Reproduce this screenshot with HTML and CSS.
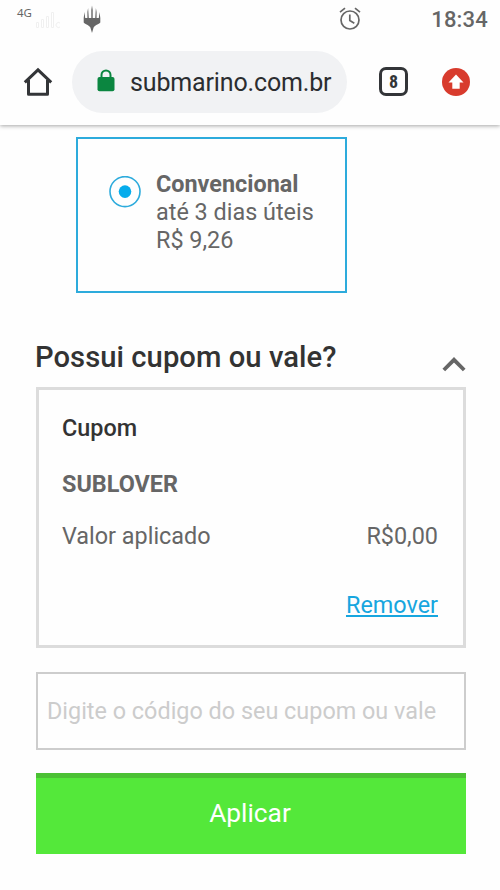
FILE: index.html
```html
<!DOCTYPE html>
<html lang="pt-BR">
<head>
<meta charset="utf-8">
<title>Submarino</title>
<link rel="stylesheet" href="styles.css">
</head>
<body>
<header class="browser">
  <div class="status">
    <span class="network">4G</span>
    <svg class="signal" width="26" height="18" viewBox="0 0 26 18"><g fill="#fff" stroke="#f0f0f0"><path d="M1.500 11.500h2v5h-2zM6.500 8.500h2v8h-2zM11.500 5.500h2v11h-2zM16.500 1.500h2v15h-2z"/></g><path d="M25 12a2.500 2.500 0 1 0 0 4" fill="none" stroke="#f0f0f0"/></svg>
    <svg class="walker" width="18" height="28" viewBox="0 0 18 28"><path fill="#666" d="M9 .5 9.700 5V13H12.200L12.900 3 13.600 7V13H15.800L16.500 7 17.300 13V17.500C16.500 19 12.500 19.500 10.600 22.500L9 28 7.400 22.500C5.500 19.500 1.500 19 .7 17.500V13L1.500 7 2.200 13H4.400V7L5.100 3 5.800 13H8.300V5Z"/></svg>
    <svg class="alarm" width="24" height="24" viewBox="0 0 24 24" fill="none" stroke="#666" stroke-width="1.700"><circle cx="12" cy="13" r="9"/><path d="M11.800 7.500V13.500L16.300 16.200M2 5.200 7 1.200M17 1.200 22 5.200"/></svg>
    <span class="clock">18:34</span>
  </div>
  <nav class="toolbar">
    <svg class="home" width="30" height="30" viewBox="0 0 30 30" fill="none" stroke="#333538" stroke-width="3"><path d="M1.800 15.300 15 2.800 28.200 15.300"/><path d="M5.500 13V27.300H24.500V13" stroke-linejoin="round"/></svg>
    <div class="address">
      <svg class="lock" width="18" height="23" viewBox="0 0 18 23"><path d="M4.500 9V6a4.500 4.500 0 0 1 9 0V9" fill="none" stroke="#0b8640" stroke-width="2"/><rect x=".5" y="8" width="17" height="14.300" rx="2" fill="#0b8640"/></svg>
      <span class="host">submarino.com.br</span>
    </div>
    <div class="tabs">8</div>
    <svg class="update" width="28" height="28" viewBox="0 0 28 28"><circle cx="14" cy="14" r="14" fill="#d83b2d"/><path fill="#fff" d="M14 6.500 21.500 14.500H17.700V20.800H10.300V14.500H6.500Z"/></svg>
  </nav>
</header>
<main>
  <section class="shipping">
    <svg class="radio" width="32" height="32" viewBox="0 0 32 32"><circle cx="16" cy="15.600" r="15" fill="none" stroke="#2dabdc" stroke-width="1.600"/><circle cx="16" cy="15.600" r="6.300" fill="#06acec"/></svg>
    <div class="option">
      <strong>Convencional</strong>
      <span>até 3 dias úteis</span>
      <span>R$ 9,26</span>
    </div>
  </section>
  <div class="heading">
    <h2>Possui cupom ou vale?</h2>
    <svg class="chevron" width="24" height="15" viewBox="0 0 24 15"><path d="M1.800 13 12 2.800 22.200 13" fill="none" stroke="#666" stroke-width="3.800"/></svg>
  </div>
  <section class="coupon">
    <h3>Cupom</h3>
    <strong class="code">SUBLOVER</strong>
    <div class="applied"><span>Valor aplicado</span><span>R$0,00</span></div>
    <a class="remove">Remover</a>
  </section>
  <div class="field"><span>Digite o código do seu cupom ou vale</span></div>
  <div class="apply"><span>Aplicar</span></div>
</main>
</body>
</html>
```
FILE: styles.css
```css
* { box-sizing: border-box; }
body {
  margin: 0;
  height: 890px;
  overflow: hidden;
  background: #fefefe;
  color: #666;
  font: 23.4px/28px Roboto, "Liberation Sans", sans-serif;
}
svg { display: block; flex: none; }
h2, h3 { margin: 0; color: #333; font-weight: 500; }
.browser { height: 125px; background: #fefefe; box-shadow: 0 1px 4px rgba(0, 0, 0, .35); }
.status { display: flex; height: 50px; align-items: flex-start; }
.network { width: 18px; margin: 6px 0 0 17px; font: 11.5px/14px "Noto Sans", sans-serif; }
.signal { margin: 11px 0 0; }
.walker { margin: 5px 0 0 22px; }
.alarm { margin: 7px 0 0 237px; }
.clock { margin: 6px 12px 0 auto; font-size: 22px; font-weight: 500; letter-spacing: .2px; }
.toolbar { display: flex; height: 63px; align-items: center; }
.home { margin-left: 23px; }
.address { display: flex; align-items: center; width: 275px; height: 62px; margin-left: 19px; padding-left: 25px; border-radius: 31px; background: #f1f2f4; }
.lock { margin-bottom: 2px; }
.host { margin-left: 15px; padding-top: 2px; color: #2b2d30; font-size: 25px; letter-spacing: -.15px; white-space: nowrap; }
.tabs { width: 29px; height: 29px; margin-left: 32px; border: 3px solid #333538; border-radius: 7px; color: #333538; font: 700 18px/23px "Roboto Condensed", Roboto, sans-serif; text-align: center; }
.update { margin-left: 34px; }
main { padding: 12px 34px 0 36px; }
.shipping { display: flex; width: 271px; height: 156px; margin-left: 40px; padding: 30px 0 0 31px; border: 2px solid #2dabdc; }
.radio { margin-top: 7px; }
.option { display: flex; flex-direction: column; margin: 1px 0 0 15px; align-items: flex-start; white-space: nowrap; }
.heading { display: flex; justify-content: space-between; height: 94px; padding-top: 48px; }
.heading h2 { font-size: 29.2px; line-height: 33px; margin-left: -1px; letter-spacing: .05px; }
.chevron { margin-top: 16px; }
.coupon { display: flex; flex-direction: column; height: 261px; padding: 24px 25px 0 23px; border: 3px solid #dcdcdc; }
.coupon h3 { font-size: 23.4px; }
.code { margin-top: 28px; }
.applied { display: flex; justify-content: space-between; margin-top: 24px; }
.remove { align-self: flex-end; margin-top: 41px; color: #17a6df; text-decoration: underline; }
.field { height: 78px; margin-top: 24px; padding: 23px 0 0 9px; border: 2px solid #cdcdcd; color: #ccc; white-space: nowrap; }
.apply { height: 81px; margin-top: 23px; padding: 21px 2px 0 0; border-top: 5px solid #4bc034; background: #54e83a; color: #fff; font-size: 26.3px; text-align: center; }
```
